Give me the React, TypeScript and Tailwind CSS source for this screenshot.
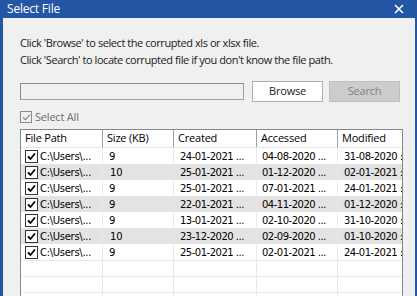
import React from "react";

const rows = [
  { size: "9", created: "24-01-2021 ...", accessed: "04-08-2020 ...", modified: "31-08-2020 :" },
  { size: "10", created: "25-01-2021 ...", accessed: "01-12-2020 ...", modified: "02-01-2021 :" },
  { size: "9", created: "25-01-2021 ...", accessed: "07-01-2021 ...", modified: "24-01-2021 :" },
  { size: "9", created: "22-01-2021 ...", accessed: "04-11-2020 ...", modified: "01-12-2020 :" },
  { size: "9", created: "13-01-2021 ...", accessed: "02-10-2020 ...", modified: "31-10-2020 :" },
  { size: "10", created: "23-12-2020 ...", accessed: "02-09-2020 ...", modified: "01-10-2020 :" },
  { size: "9", created: "25-01-2021 ...", accessed: "02-01-2021 ...", modified: "24-01-2021 :" },
];

const cols = "grid grid-cols-[82px_71px_83px_81px_90px]";

function Check({ on }: { on: boolean }) {
  return (
    <span className="w-[13px] h-[13px] border border-[#333] bg-white flex items-center justify-center shrink-0">
      {on && (
        <svg width="9" height="9" viewBox="0 0 9 9">
          <path d="M1 4.5 L3.5 7 L8 1.5" stroke="#000" strokeWidth="1.8" fill="none" />
        </svg>
      )}
    </span>
  );
}

export default function App() {
  return (
    <div
      className="w-[417px] h-[296px] bg-[#2357a5] flex flex-col overflow-hidden"
      style={{ fontFamily: '"Open Sans", "Noto Sans", sans-serif' }}
    >
      <div className="h-[24px] flex items-center justify-between pl-[7px] pr-[13px] text-white">
        <span className="text-[12px] tracking-[-0.2px]">Select File</span>
        <svg width="10" height="10" viewBox="0 0 10 10">
          <path d="M1 1 L9 9 M9 1 L1 9" stroke="#fff" strokeWidth="1.6" />
        </svg>
      </div>
      <div className="flex-1 ml-[3px] mr-[2px] bg-[#f0f0f0] pl-[17px] pr-[12px] pt-[16px] flex flex-col text-[#1a1a1a]">
        <div className="text-[11px] leading-[17px] tracking-[-0.43px]">
          Click 'Browse' to select the corrupted xls or xlsx file.
        </div>
        <div className="text-[11px] leading-[17px] tracking-[-0.43px]">
          Click 'Search' to locate corrupted file if you don't know the file path.
        </div>
        <div className="flex items-center mt-[13px] h-[21px]">
          <div className="w-[224px] h-[17px] border border-[#a0a0a0] border-t-[#8a8a8a] border-l-[#8a8a8a] bg-[#f0f0f0]" />
          <div className="ml-[8px] w-[71px] h-[21px] bg-white border border-[#adadad] flex items-center justify-center text-[11px] tracking-[-0.2px]">
            Browse
          </div>
          <div className="ml-[6px] w-[71px] h-[21px] bg-[#cccccc] border border-[#bfbfbf] flex items-center justify-center text-[11px] text-[#838383] tracking-[-0.2px]">
            Search
          </div>
        </div>
        <div className="flex items-center mt-[8px] h-[14px] text-[11px] text-[#6d6d6d]">
          <span className="w-[12px] h-[12px] border border-[#8a8a8a] flex items-center justify-center bg-[#f0f0f0]">
            <svg width="9" height="9" viewBox="0 0 9 9">
              <path d="M1.2 4.5 L3.5 6.8 L7.8 1.8" stroke="#7a7a7a" strokeWidth="1.1" fill="none" />
            </svg>
          </span>
          <span className="ml-[3px] tracking-[-0.2px]">Select All</span>
        </div>
        <div className="mt-[5px] w-[383px] flex-1 border border-[#828790] border-b-0 bg-white overflow-hidden text-[11px] text-black">
          <div className={`${cols} h-[18px] border-b border-[#e5e5e5] bg-white`}>
            {["File Path", "Size (KB)", "Created", "Accessed", "Modified"].map((h) => (
              <div key={h} className="border-r border-[#a0a0a0] pl-[4px] flex items-center tracking-[-0.2px] whitespace-nowrap">
                {h}
              </div>
            ))}
          </div>
          {rows.map((r, i) => (
            <div
              key={i}
              className={`${cols} h-[16px] ${i % 2 === 1 ? "bg-[#e3e3e3]" : "bg-white"}`}
              style={{ fontFamily: '"DejaVu Sans", sans-serif' }}
            >
              <div className="flex items-center pl-[4px] border-r border-[#e8e8e8] whitespace-nowrap text-[10px] tracking-[-0.3px]">
                <Check on />
                <span className="ml-[2px]">C:\Users\...</span>
              </div>
              <div className={`flex items-center border-r border-[#e8e8e8] text-[10px] ${r.size === "10" ? "pl-[7px]" : "pl-[6px]"}`}>{r.size}</div>
              <div className="flex items-center pl-[6px] border-r border-[#e8e8e8] text-[10px] tracking-[-0.5px] whitespace-nowrap">{r.created}</div>
              <div className="flex items-center pl-[5px] border-r border-[#e8e8e8] text-[10px] tracking-[-0.5px] whitespace-nowrap">{r.accessed}</div>
              <div className="flex items-center pl-[6px] text-[10px] tracking-[-0.5px] whitespace-nowrap">{r.modified}</div>
            </div>
          ))}
          {[0, 1, 2].map((i) => (
            <div key={"e" + i} className={`${cols} h-[16px] border-t border-[#e8e8e8]`}>
              {[0, 1, 2, 3, 4].map((c) => (
                <div key={c} className="border-r border-[#e8e8e8]" />
              ))}
            </div>
          ))}
        </div>
      </div>
    </div>
  );
}
